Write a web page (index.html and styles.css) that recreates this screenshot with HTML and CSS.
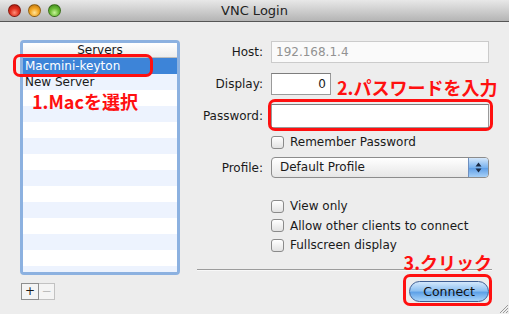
FILE: index.html
```html
<!DOCTYPE html>
<html lang="ja">
<head>
  <meta charset="UTF-8" />
  <title>VNC Login</title>
  <link rel="stylesheet" href="styles.css">
</head>
<body>
  <div class="window">
    <div class="titlebar">
      <div class="lights">
        <span class="light red"></span>
        <span class="light orange"></span>
        <span class="light green"></span>
      </div>
      <div class="title">VNC Login</div>
      <div></div>
    </div>

    <div class="content">
      <div class="left-pane">
        <div class="list-wrap">
          <div class="list">
            <div class="list-head">Servers</div>
            <div class="list-body">
              <div class="list-row selected">Macmini-keyton</div>
              <div class="list-row">New Server</div>
            </div>
          </div>
          <div class="ring ring-server"></div>
          <div class="note note-server">1.Macを選択</div>
        </div>
        <div class="list-buttons">
          <span class="sq-btn">+</span>
          <span class="sq-btn disabled">−</span>
        </div>
      </div>

      <div class="right-pane">
        <div class="row row-host">
          <label>Host:</label>
          <div class="field disabled">192.168.1.4</div>
        </div>
        <div class="row row-display">
          <label>Display:</label>
          <div class="display-line">
            <div class="field short">0</div>
            <span class="note">2.パスワードを入力</span>
          </div>
        </div>
        <div class="row row-password">
          <label>Password:</label>
          <div class="ringed ringed-pass">
            <div class="field tall"></div>
          </div>
        </div>
        <div class="row row-remember">
          <span></span>
          <div class="check"><span class="box"></span>Remember Password</div>
        </div>
        <div class="row row-profile">
          <label>Profile:</label>
          <div class="popup">
            <span>Default Profile</span>
            <span class="popup-arrows">
              <svg width="7" height="11" viewBox="0 0 7 11"><path d="M3.5 0.5 L6.5 4.5 H0.5 Z M3.5 10.5 L6.5 6.5 H0.5 Z" fill="#1b2a44"/></svg>
            </span>
          </div>
        </div>
        <div class="options">
          <div class="row">
            <span></span>
            <div class="check"><span class="box"></span>View only</div>
          </div>
          <div class="row">
            <span></span>
            <div class="check"><span class="box"></span>Allow other clients to connect</div>
          </div>
          <div class="row">
            <span></span>
            <div class="check"><span class="box"></span>Fullscreen display</div>
          </div>
        </div>
        <div class="footer">
          <span class="note note-click">3.クリック</span>
          <div class="separator"></div>
          <div class="button-line">
            <div class="ringed ringed-connect">
              <span class="connect">Connect</span>
            </div>
          </div>
        </div>
      </div>
    </div>

    <svg class="grip" width="10" height="10" viewBox="0 0 10 10">
      <path d="M2 10 L10 2 M5 10 L10 5 M8 10 L10 8" stroke="#999" stroke-width="1"/>
    </svg>
  </div>
</body>
</html>
```

FILE: styles.css
```css
body {
  margin: 0;
  background: #ededed;
}

.window {
  position: relative;
  width: 509px;
  height: 314px;
  overflow: hidden;
  background: #ededed;
  font-family: "DejaVu Sans", sans-serif;
  font-size: 12px;
  color: #1a1a1a;
}

/* title bar */
.titlebar {
  height: 21px;
  border-bottom: 1px solid #565656;
  background: linear-gradient(#e8e8e8, #b4b4b4);
  display: grid;
  grid-template-columns: 1fr auto 1fr;
  align-items: center;
}

.lights {
  display: flex;
  gap: 7px;
  padding-left: 8px;
}

.light {
  width: 13px;
  height: 13px;
  border-radius: 50%;
  box-sizing: border-box;
  border: 1px solid rgba(0, 0, 0, 0.35);
}

.light.red {
  background: radial-gradient(circle at 50% 70%, #ff8f7a 0, #e0321f 45%, #a0130a 100%);
}

.light.orange {
  background: radial-gradient(circle at 50% 70%, #ffe39a 0, #f3a724 45%, #b46a08 100%);
}

.light.green {
  background: radial-gradient(circle at 50% 70%, #c9f39a 0, #6cbd37 45%, #357e14 100%);
}

.title {
  font-size: 13px;
  color: #222;
}

/* content */
.content {
  display: flex;
}

.left-pane {
  padding: 18px 0 0 20px;
  width: 197px;
  box-sizing: border-box;
}

.list-wrap {
  position: relative;
  width: 160px;
}

.list {
  height: 235px;
  box-sizing: border-box;
  border: 3px solid #8cb1e0;
  border-radius: 4px;
  background: #fff;
  overflow: hidden;
}

.list-head {
  height: 14px;
  line-height: 14px;
  text-align: center;
  border-bottom: 1px solid #bdbdbd;
  background: linear-gradient(#ffffff, #ededed);
}

.list-body {
  height: 214px;
  background: repeating-linear-gradient(#ffffff 0 16px, #edf3fe 16px 32px);
}

.list-row {
  height: 16px;
  line-height: 16px;
  padding-left: 2px;
}

.list-row.selected {
  background: #3d84d8;
  color: #fff;
}

.list-buttons {
  display: flex;
  margin: 8px 0 0 1px;
}

.sq-btn {
  width: 18px;
  height: 17px;
  box-sizing: border-box;
  border: 1px solid #8e8e8e;
  background: #f4f4f4;
  text-align: center;
  line-height: 15px;
  font-size: 12px;
}

.sq-btn.disabled {
  border-color: #c2c2c2;
  border-left: none;
  width: 16px;
  color: #bcbcbc;
}

/* red annotations */
.note {
  font-family: "Noto Sans CJK JP", sans-serif;
  font-weight: 700;
  font-size: 18px;
  line-height: 20px;
  color: #ff1010;
  white-space: nowrap;
}

.note-server {
  position: absolute;
  left: 12px;
  top: 51px;
}

.ring {
  position: absolute;
  border: 3px solid #ff1010;
  border-radius: 7px;
  box-sizing: border-box;
}

.ring-server {
  left: -7px;
  top: 14px;
  width: 140px;
  height: 23px;
}

.ringed {
  position: relative;
}

.ringed::after {
  content: "";
  position: absolute;
  border: 3px solid #ff1010;
  border-radius: 7px;
}

.ringed-pass::after {
  inset: -5px -4px -3px -3px;
}

.ringed-connect::after {
  inset: -7px -3px -4px -6px;
}

/* form */
.right-pane {
  width: 295px;
  padding-top: 19px;
}

.row {
  display: grid;
  grid-template-columns: 66px 218px;
  column-gap: 8px;
  align-items: center;
}

.row label {
  text-align: right;
}

.row-display {
  margin-top: 10px;
}

.row-password {
  margin-top: 9px;
}

.row-remember {
  margin-top: 6px;
  height: 16px;
}

.row-profile {
  margin-top: 7px;
}

.field {
  height: 22px;
  box-sizing: border-box;
  border: 1px solid #9a9a9a;
  border-top-color: #7d7d7d;
  background: #fff;
  padding: 0 4px;
  line-height: 20px;
}

.field.disabled {
  border-color: #cbcbcb;
  background: #fafafa;
  color: #929292;
}

.field.short {
  width: 60px;
  flex-shrink: 0;
  text-align: right;
}

.field.tall {
  height: 24px;
}

.display-line {
  display: flex;
  align-items: center;
  gap: 6px;
  height: 22px;
}

.display-line .note {
  line-height: 16px;
  margin-top: 6px;
}

.check {
  display: flex;
  align-items: center;
  gap: 6px;
  white-space: nowrap;
}

.box {
  width: 13px;
  height: 13px;
  box-sizing: border-box;
  border: 1px solid #8a8a8a;
  border-radius: 3px;
  background: linear-gradient(#ffffff, #e2e2e2);
}

.popup {
  height: 21px;
  box-sizing: border-box;
  border: 1px solid #8c8c8c;
  border-radius: 4px;
  background: linear-gradient(#ffffff, #e6e6e6);
  display: flex;
  justify-content: space-between;
  overflow: hidden;
}

.popup span:first-child {
  padding-left: 8px;
  line-height: 19px;
}

.popup-arrows {
  width: 19px;
  border-left: 1px solid #6e8fbf;
  background: linear-gradient(#d4e7fb, #79b2ee 50%, #5b9ce6 51%, #a7d0f7);
  display: flex;
  align-items: center;
  justify-content: center;
}

.options {
  margin-top: 20px;
  display: flex;
  flex-direction: column;
  gap: 3.5px;
}

.options .row {
  height: 16px;
}

.footer {
  position: relative;
  margin-top: 16px;
}

.note-click {
  position: absolute;
  right: 0;
  top: -17px;
}

.separator {
  height: 1px;
  background: #9c9c9c;
  border-bottom: 1px solid #f8f8f8;
}

.button-line {
  display: flex;
  justify-content: flex-end;
  padding: 10px 3px 0 0;
}

.connect {
  display: block;
  width: 80px;
  height: 21px;
  box-sizing: border-box;
  border: 1px solid #3f5f94;
  border-radius: 11px;
  background: linear-gradient(#d3e8fc, #8fc1f1 45%, #5fa2e8 55%, #a9d5fa);
  text-align: center;
  line-height: 19px;
  font-size: 12.5px;
  color: #111;
}

.grip {
  position: absolute;
  right: 1px;
  bottom: 1px;
}
```
